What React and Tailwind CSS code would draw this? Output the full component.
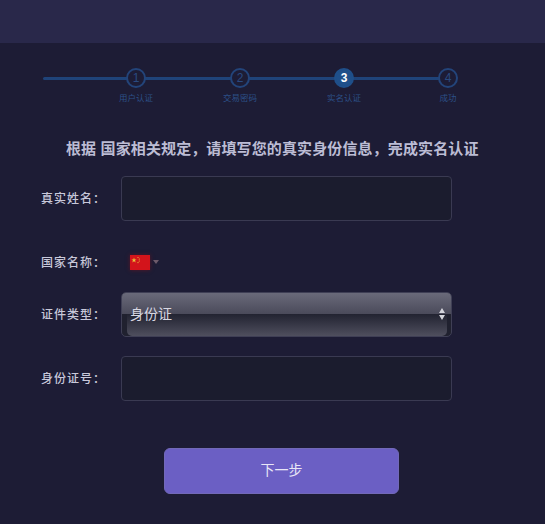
const cjk = { fontFamily: '"Liberation Sans","Noto Sans CJK SC",sans-serif' };

function Step({ n, label, active }) {
  return (
    <div className="relative z-10 w-[104px] flex flex-col items-center">
      <div className={active
        ? "w-5 h-5 rounded-full bg-[#1f4f8a] border-2 border-[#1f4f8a] text-white text-[12px] font-bold flex items-center justify-center"
        : "w-5 h-5 rounded-full bg-[#1d1c35] border-2 border-[#23447a] text-[#2a4a80] text-[12px] flex items-center justify-center"}>
        {n}
      </div>
      <div className="mt-[5px] text-[8.5px] leading-[10px] text-[#2c5088] whitespace-nowrap">{label}</div>
    </div>
  );
}

function Row({ label, className, children }) {
  return (
    <div className={"flex items-center " + className}>
      <div className="w-[121px] pl-[41px] text-[12px] font-medium text-[#c8c8da] tracking-[1px] whitespace-nowrap">{label}</div>
      {children}
    </div>
  );
}

function TextBox() {
  return <div className="w-[331px] h-[45px] rounded-[4px] border border-[#3a3a52] bg-[#1b1c2e]" />;
}

export default function App() {
  return (
    <div style={cjk} className="w-[545px] h-[524px] overflow-hidden bg-[#1d1c35]">
      <div className="h-[43px] bg-[#29284a]" />
      <div className="relative mt-[25px] ml-[84px] flex h-[34px]">
        <div className="absolute left-[-41px] w-[405px] top-[9px] h-[3px] bg-[#1f4379] rounded-full" />
        <Step n="1" label="用户认证" />
        <Step n="2" label="交易密码" />
        <Step n="3" label="实名认证" active />
        <Step n="4" label="成功" />
      </div>
      <div className="mt-[27px] h-[40px] pl-[66px] flex items-center text-[15px] font-bold tracking-[0.12px] text-[#bcbcd4] whitespace-nowrap">
        根据 国家相关规定，请填写您的真实身份信息，完成实名认证
      </div>
      <Row label="真实姓名：" className="mt-[7px]">
        <TextBox />
      </Row>
      <Row label="国家名称：" className="mt-[22px] h-[40px]">
        <div className="ml-[9px] mb-[2px] flex items-center gap-[3px]">
          <svg width="20" height="15" viewBox="0 0 20 15" className="shadow-[0_0_4px_#5a1526]">
            <rect width="20" height="15" fill="#d3141b" />
            <polygon points="4,2.5 4.7,4.4 6.6,4.4 5,5.5 5.7,7.4 4,6.2 2.3,7.4 3,5.5 1.4,4.4 3.3,4.4" fill="#e8c23a" />
            <circle cx="8" cy="2.5" r=".6" fill="#e8c23a" />
            <circle cx="9.3" cy="4" r=".6" fill="#e8c23a" />
            <circle cx="9.3" cy="6" r=".6" fill="#e8c23a" />
            <circle cx="8" cy="7.6" r=".6" fill="#e8c23a" />
          </svg>
          <div className="w-0 h-0 border-x-[3px] border-x-transparent border-t-[4px] border-t-[#6d5a6a]" />
        </div>
      </Row>
      <Row label="证件类型：" className="mt-[9px]">
        <div className="relative w-[331px] h-[45px] rounded-[5px] border border-[#3f3f55] bg-[#20212f] overflow-hidden">
          <div className="h-[21px] bg-gradient-to-b from-[#6a6a7a] to-[#4a4a5a]" />
          <div className="ml-[5px] mr-[4px] h-[22px] rounded-b-[5px] bg-gradient-to-b from-[#222331] to-[#4f4f5e]" />
          <div className="absolute left-[8px] top-[12px] text-[14px] leading-[18px] text-[#d8d8e2]">身份证</div>
          <div className="absolute right-[6px] top-[15px] flex flex-col gap-[2px]">
            <div className="w-0 h-0 border-x-[3.5px] border-x-transparent border-b-[5px] border-b-[#d5d5dd]" />
            <div className="w-0 h-0 border-x-[3.5px] border-x-transparent border-t-[5px] border-t-[#d5d5dd]" />
          </div>
        </div>
      </Row>
      <Row label="身份证号：" className="mt-[19px]">
        <TextBox />
      </Row>
      <button className="block ml-[164px] mt-[47px] w-[235px] h-[46px] pb-[2px] rounded-[6px] bg-[#6b5fc4] border border-[#7269b8] text-[14px] text-[#e8e6f6]">
        下一步
      </button>
    </div>
  );
}
